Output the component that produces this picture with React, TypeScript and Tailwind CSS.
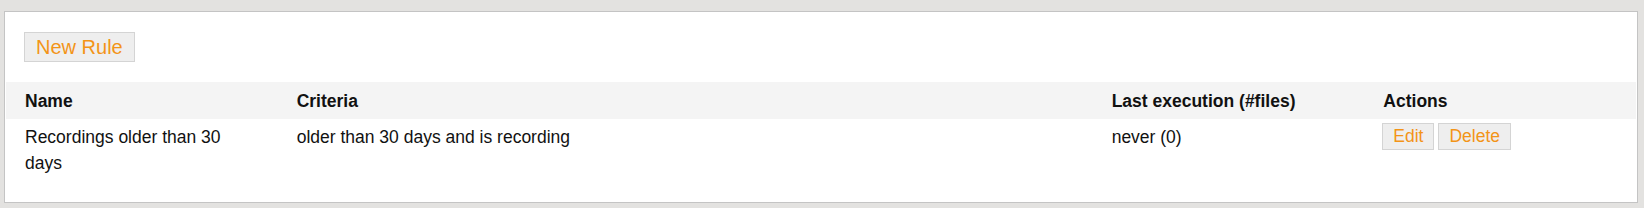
import React from 'react'

const FONT = { fontFamily: '"Liberation Sans", Arial, sans-serif' }

const btn =
  'inline-block bg-[#eeeeee] border border-[#d4d4d4] text-[#f39417] leading-none'

export default function App() {
  return (
    <div className="min-h-[208px] bg-[#e3e2e0] pt-[11px] pb-[5px] pl-[4px] pr-[6px]" style={FONT}>
      <div className="bg-white border border-[#c4c4c4] pt-[20px] pb-[20px] px-[1px] text-[17.5px] text-[#111]">
        {/* ── toolbar ── */}
        <div className="pl-[18px] mb-[20px]">
          <button type="button" className={`${btn} h-[30px] px-[11px] text-[20px]`}>
            New Rule
          </button>
        </div>

        {/* ── header ── */}
        <div className="grid grid-cols-[1fr_3fr_1fr_1fr] bg-[#f4f4f4] font-bold leading-[26px]">
          <div className="py-[5.5px] px-[19px]">Name</div>
          <div className="py-[5.5px] px-[19px]">Criteria</div>
          <div className="py-[5.5px] px-[19px]">Last execution (#files)</div>
          <div className="py-[5.5px] px-[19px]">Actions</div>
        </div>

        {/* ── rows ── */}
        <div className="grid grid-cols-[1fr_3fr_1fr_1fr] leading-[26px]">
          <div className="pt-[5px] pb-[6px] px-[19px]">Recordings older than 30 days</div>
          <div className="pt-[5px] pb-[6px] px-[19px]">older than 30 days and is recording</div>
          <div className="pt-[5px] pb-[6px] px-[19px]">never (0)</div>
          <div className="pt-[4px] px-[18px] flex gap-[4px] items-start">
            <button type="button" className={`${btn} h-[27px] px-[10px] text-[17.5px]`}>
              Edit
            </button>
            <button type="button" className={`${btn} h-[27px] px-[10px] text-[17.5px]`}>
              Delete
            </button>
          </div>
        </div>
      </div>
    </div>
  )
}
